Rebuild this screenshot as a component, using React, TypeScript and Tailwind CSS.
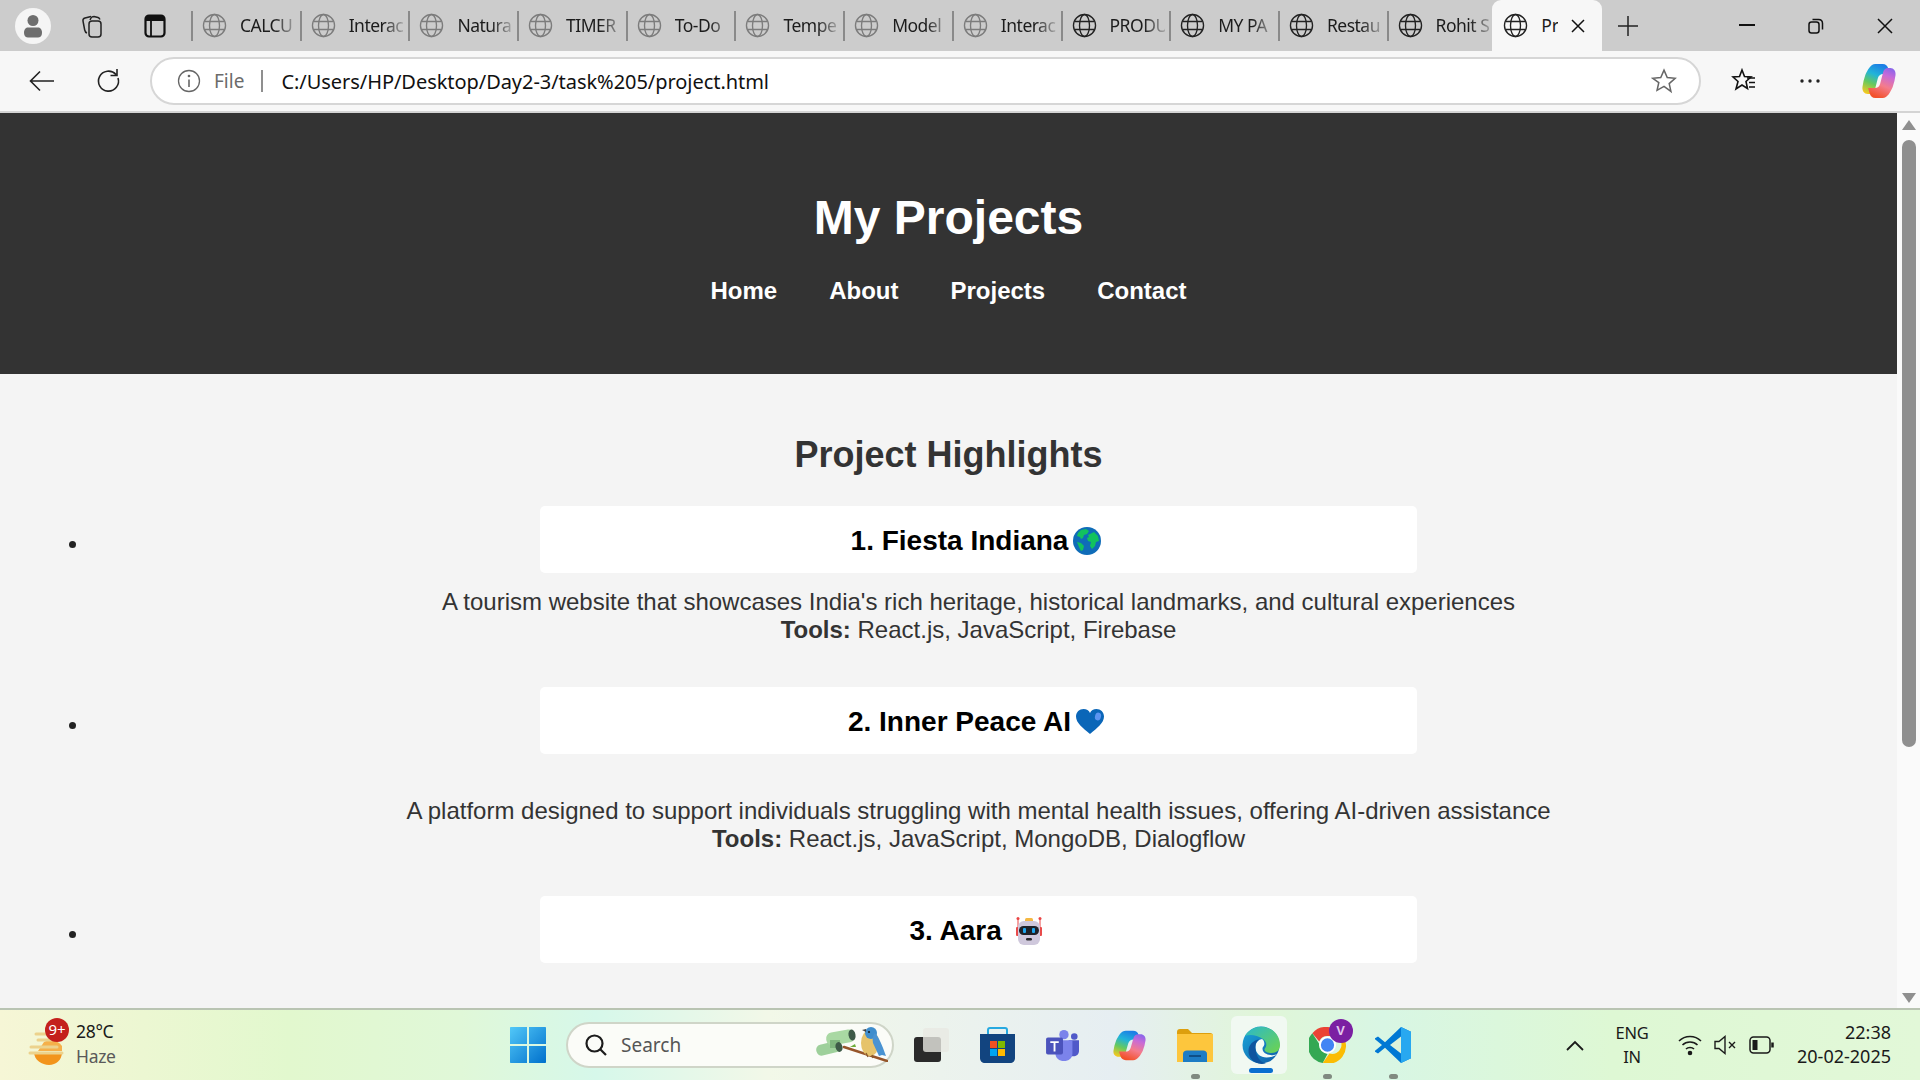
import React from "react";

const tabs = ["CALCU","Interac","Natura","TIMER","To-Do","Tempe","Model","Interac","PRODU","MY PA","Restau","Rohit S"];
const UI = "font-['Noto_Sans','Open_Sans',sans-serif]";

function Globe({ dim = false, size = 25 }: { dim?: boolean; size?: number }) {
  const c = dim ? "#7c7c7c" : "#222222";
  return (
    <svg width={size} height={size} viewBox="0 0 24 24" fill="none" stroke={c} strokeWidth="1.3" className="shrink-0">
      <circle cx="12" cy="12" r="10.6" />
      <ellipse cx="12" cy="12" rx="4.8" ry="10.6" />
      <path d="M2.2 8.2h19.6M2.2 15.8h19.6" />
    </svg>
  );
}

function Copilot({ w = 33, h = 36 }: { w?: number; h?: number }) {
  const lobe = "M14 1h8c3 0 5 1.500 6 5l1.500 5h-7c-3 0-5 1.500-5.800 4.500l-3 11c-.8 3-2.500 4.500-5.200 4.500H6c-3.500 0-6-3-5.500-7 .5-4 1.500-8 3-12C6 7 9 1 14 1z";
  return (
    <svg width={w} height={h} viewBox="0 0 36 36" preserveAspectRatio="none">
      <defs>
        <linearGradient id="cpa" x1="0.6" y1="0" x2="0.2" y2="1">
          <stop offset="0" stopColor="#1c7fe6" /><stop offset="0.35" stopColor="#22b4d8" /><stop offset="0.65" stopColor="#66c95e" /><stop offset="1" stopColor="#f6c81f" />
        </linearGradient>
        <linearGradient id="cpb" x1="0.6" y1="0" x2="0.2" y2="1">
          <stop offset="0" stopColor="#f2512b" /><stop offset="0.4" stopColor="#f47c8c" /><stop offset="0.75" stopColor="#c76ad8" /><stop offset="1" stopColor="#8a66ea" />
        </linearGradient>
      </defs>
      <path d={lobe} fill="url(#cpa)" />
      <path d={lobe} fill="url(#cpb)" transform="rotate(180 18 18)" />
    </svg>
  );
}

function Globe3D() {
  return (
    <svg width="28" height="28" viewBox="0 0 28 28">
      <circle cx="14" cy="14" r="14" fill="#0f6cb8" />
      <path d="M8 3l5-1 3 2-2 3-3 1-1 3-2 1-1-2-3-1 1-3 2-2zM15 8l6-3 4 4 1 5-3 1-1 4-3 3-2-3 1-4-3-1-1-3 2-1-1-2z" fill="#12c25e" />
      <path d="M4 15l4 1 3 3-1 4-2 1-2-4z" fill="#12c25e" />
    </svg>
  );
}

function Heart() {
  return (
    <svg width="28" height="26" viewBox="0 0 28 26">
      <path d="M14 25C7 19 0 14 0 7.500 0 3 3.500 0 7.500 0 10.500 0 13 1.500 14 4c1-2.500 3.500-4 6.500-4C24.500 0 28 3 28 7.500 28 14 21 19 14 25z" fill="#0a66b8" />
      <ellipse cx="22" cy="7.500" rx="3" ry="4" fill="#5c94f0" transform="rotate(15 22 7.500)" />
    </svg>
  );
}

function Robot() {
  return (
    <svg width="30" height="30" viewBox="0 0 30 30">
      <path d="M4 3v12M26 3v12" stroke="#ea4545" strokeWidth="1" />
      <circle cx="4" cy="2.500" r="1.500" fill="#ea4545" />
      <circle cx="26" cy="2.500" r="1.500" fill="#ea4545" />
      <rect x="2" y="11" width="3" height="9" rx="1" fill="#e84b4b" />
      <rect x="25" y="11" width="3" height="9" rx="1" fill="#e84b4b" />
      <rect x="11" y="2" width="8" height="4" rx="1.500" fill="#f5b842" />
      <rect x="4" y="5" width="22" height="24" rx="6" fill="#cfc8dc" />
      <rect x="5" y="10" width="20" height="9" rx="4.500" fill="#1e2128" />
      <rect x="9" y="12" width="3" height="5" rx="1" fill="#1fa6ee" />
      <rect x="18" y="12" width="3" height="5" rx="1" fill="#1fa6ee" />
      <rect x="12" y="22" width="6" height="2.500" rx="1.200" fill="#2a2a2f" />
    </svg>
  );
}

function Tab({ label, dim }: { label: string; dim: boolean }) {
  return (
    <div className="w-[108.700px] h-[30px] flex items-center pl-[9px] border-l-2 border-[#8a8a8a] shrink-0">
      <Globe dim={dim} />
      <span className={`ml-[13px] w-[55px] overflow-hidden whitespace-nowrap text-[17.500px] tracking-[-0.5px] text-[#1c1c1c] [mask-image:linear-gradient(to_right,black_62%,rgba(0,0,0,0.2))] ${UI}`}>{label}</span>
    </div>
  );
}

function TopBar() {
  return (
    <div className="h-[51px] bg-[#cccccc] flex items-center relative shrink-0">
      <div className="w-[191px] flex items-center shrink-0">
        <div className="ml-[15px] w-[36px] h-[36px] rounded-full bg-[#f5f5f5] flex items-center justify-center">
          <svg width="20" height="24" viewBox="0 0 20 24" fill="#6e6e6e">
            <circle cx="10" cy="6.500" r="5.500" />
            <path d="M1 19c0-4 2-5.500 4-5.500h10c2 0 4 1.500 4 5.500 0 3-2 4.500-4 4.500H5c-2 0-4-1.500-4-4.500z" />
          </svg>
        </div>
        <div className="ml-[28px]">
          <svg width="26" height="26" viewBox="0 0 26 26" fill="none" stroke="#222" strokeWidth="1.500">
            <rect x="10" y="8" width="12" height="16" rx="3" />
            <path d="M8 20c-1.500-.5-2-1.500-2.300-3L4 8c-.3-1.500.5-2.500 2-3l6-1.500" />
            <path d="M11 7l1-2c.5-1 1.500-1.500 3-1.500l4 1c1 .3 1.500 1 2 2" />
          </svg>
        </div>
        <div className="ml-[39px]">
          <svg width="22" height="24" viewBox="0 0 22 24" fill="none">
            <rect x="1.500" y="1.500" width="19" height="21" rx="3.500" stroke="#111" strokeWidth="2.200" />
            <path d="M2 2h18v5H2z" fill="#111" />
            <path d="M7 7v15" stroke="#111" strokeWidth="1.800" />
          </svg>
        </div>
      </div>
      {tabs.map((t, i) => <Tab key={i} label={t} dim={i < 8} />)}
      <div className="w-[110px] h-[51px] ml-[-3px] bg-[#f7f7f7] rounded-t-[9px] flex items-center pl-[11px] shrink-0 z-10">
        <Globe />
        <span className={`ml-[13px] w-[17px] overflow-hidden whitespace-nowrap text-[17.500px] text-[#1c1c1c] ${UI}`}>Pr</span>
        <svg className="ml-[13px]" width="14" height="14" viewBox="0 0 14 14" stroke="#111" strokeWidth="1.500"><path d="M1 1l12 12M13 1L1 13" /></svg>
      </div>
      <svg className="ml-[15px]" width="22" height="22" viewBox="0 0 22 22" stroke="#222" strokeWidth="1.500"><path d="M11 1v20M1 11h20" /></svg>
      <svg className="ml-[100px]" width="16" height="3" viewBox="0 0 16 3"><rect width="16" height="2" fill="#111" /></svg>
      <svg className="ml-[53px]" width="16" height="16" viewBox="0 0 16 16" fill="none" stroke="#111" strokeWidth="1.500">
        <rect x="1" y="4" width="10" height="11" rx="2.500" />
        <path d="M4.500 1.500h6c2.500 0 4 1.500 4 4v6" />
      </svg>
      <svg className="ml-[53px]" width="16" height="16" viewBox="0 0 16 16" stroke="#111" strokeWidth="1.500"><path d="M1 1l14 14M15 1L1 15" /></svg>
    </div>
  );
}

function ToolBar() {
  return (
    <div className="h-[62px] bg-[#f7f7f7] border-b-2 border-[#d4d4d4] flex items-center shrink-0 z-20">
      <svg className="ml-[29px]" width="26" height="22" viewBox="0 0 26 22" fill="none" stroke="#222" strokeWidth="1.600"><path d="M25 11H2M11 1.500L1.500 11l9.500 9.500" /></svg>
      <svg className="ml-[41px]" width="26" height="26" viewBox="0 0 26 26" fill="none" stroke="#222" strokeWidth="1.600"><path d="M22 10a10 10 0 1 1-2-3.500M21 1v6.500h-6.500" /></svg>
      <div className="ml-[28px] w-[1551px] h-[48px] bg-white rounded-full border-2 border-[#d6d6d6] flex items-center">
        <svg className="ml-[25px]" width="24" height="24" viewBox="0 0 24 24" fill="none" stroke="#666" strokeWidth="1.300">
          <circle cx="12" cy="12" r="10.500" /><path d="M12 10.500V18" strokeWidth="1.600" /><circle cx="12" cy="7" r="0.700" fill="#666" />
        </svg>
        <span className={`ml-[13px] mt-[1px] text-[19px] text-[#6b6b6b] ${UI}`}>File</span>
        <div className="ml-[17px] w-[2px] h-[22px] bg-[#8f8f8f]" />
        <span className={`ml-[18px] mt-[1px] text-[20px] tracking-[-0.05px] text-[#111] ${UI}`}>C:/Users/HP/Desktop/Day2-3/task%205/project.html</span>
        <svg className="ml-auto mr-[22px]" width="26" height="26" viewBox="0 0 24 24" fill="none" stroke="#666" strokeWidth="1.400"><path d="M12 2l3 6.800 7.300.7-5.500 4.900 1.600 7.200L12 17l-6.400 3.600 1.600-7.200L1.700 9.500 9 8.800z" /></svg>
      </div>
      <svg className="ml-[30px]" width="26" height="26" viewBox="0 0 26 26" fill="none" stroke="#111" strokeWidth="1.600"><path d="M11 2l2.500 6.500L20 9l-5 4.500 1.500 7L11 17l-6 4 2-7.500L2 9l6.500-.5z" /><path d="M16 10h8M18 14.500h6M18 19h6" /></svg>
      <svg className="ml-[43px]" width="20" height="4" viewBox="0 0 20 4" fill="#222"><circle cx="2" cy="2" r="1.700" /><circle cx="10" cy="2" r="1.700" /><circle cx="18" cy="2" r="1.700" /></svg>
      <div className="ml-[42px]"><Copilot w={34} h={36} /></div>
    </div>
  );
}

function Project({ title, emoji, desc, tools, first }: { title: string; emoji: React.ReactNode; desc?: string; tools?: string; first?: boolean }) {
  return (
    <li className="flex items-start">
      <div className="w-[7px] h-[7px] rounded-full bg-[#222] mt-[35px] shrink-0" />
      <div className="flex-1 flex flex-col items-center">
        <div className="w-[877px] h-[67px] pt-[3px] bg-white rounded-[5px] flex items-center justify-center">
          <h3 className="text-[28px] font-bold text-black whitespace-pre flex items-center leading-[32px]">{title}<span className="w-[38px] flex justify-center">{emoji}</span></h3>
        </div>
        {desc && (
          <p className={`text-[24px] leading-[28px] text-[#333] text-center ${first ? "mt-[15px] mb-[43px]" : "mt-[43px] mb-[43px]"}`}>
            {desc}<br /><b>Tools:</b> {tools}
          </p>
        )}
      </div>
    </li>
  );
}

function Page() {
  return (
    <div className="flex-1 flex min-h-0 overflow-hidden font-['Liberation_Sans',Arial,sans-serif]">
      <div className="flex-1 min-w-0 overflow-hidden bg-[#f4f4f4]">
        <header className="h-[261px] bg-[#333] flex flex-col items-center text-white font-bold pt-[77px]">
          <h1 className="text-[48px] leading-[55px]">My Projects</h1>
          <nav className="mt-[32px] flex gap-[52px] text-[24px] leading-[28px]">
            <span>Home</span><span>About</span><span>Projects</span><span>Contact</span>
          </nav>
        </header>
        <h2 className="mt-[60px] text-[36px] leading-[41px] font-bold text-[#333] text-center">Project Highlights</h2>
        <ul className="mt-[31px] pl-[69px] pr-[16px]">
          <Project first title="1. Fiesta Indiana" emoji={<Globe3D />} desc="A tourism website that showcases India's rich heritage, historical landmarks, and cultural experiences" tools="React.js, JavaScript, Firebase" />
          <Project title="2. Inner Peace AI" emoji={<Heart />} desc="A platform designed to support individuals struggling with mental health issues, offering AI-driven assistance" tools="React.js, JavaScript, MongoDB, Dialogflow" />
          <Project title="3. Aara " emoji={<Robot />} />
        </ul>
      </div>
      <div className="w-[23px] bg-[#fafafa] flex flex-col items-center shrink-0">
        <svg className="mt-[7px]" width="14" height="11" viewBox="0 0 14 11" fill="#8f8f8f"><path d="M7 0l7 10H0z" /></svg>
        <div className="mt-[9px] w-[14px] h-[607px] rounded-full bg-[#8f8f8f]" />
        <svg className="mt-auto mb-[5px]" width="14" height="11" viewBox="0 0 14 11" fill="#8f8f8f"><path d="M7 11L0 1h14z" /></svg>
      </div>
    </div>
  );
}

function Weather() {
  return (
    <svg width="40" height="46" viewBox="0 0 40 46">
      <path d="M6 30h28c0 8-6 13-13 13S6 38 6 30z" fill="#f2941c" />
      <path d="M16 20c6-3 14-2 18 4v5H10z" fill="#f5b04a" />
      <path d="M8 12h10M10 18h14M3 25h26M2 31h32" stroke="#ecd28c" strokeWidth="3" strokeLinecap="round" />
    </svg>
  );
}

function Bird() {
  return (
    <svg width="72" height="36" viewBox="0 0 72 36">
      <path d="M28 21l43 14" stroke="#96552a" strokeWidth="2.500" strokeLinecap="round" />
      <path d="M34 21l5-3 1 3z" fill="#6fae3c" />
      <rect x="0" y="17" width="25" height="11" rx="5" fill="#9ed09b" transform="rotate(-14 12 22)" />
      <rect x="10" y="5" width="29" height="13" rx="6" fill="#a9d8a3" transform="rotate(-10 24 11)" />
      <rect x="14" y="14" width="10" height="8" fill="#7fb57e" />
      <ellipse cx="23" cy="21" rx="3.500" ry="5" fill="#3e5a48" transform="rotate(-14 23 21)" />
      <ellipse cx="36" cy="9" rx="3.500" ry="5.500" fill="#3e5a48" transform="rotate(-10 36 9)" />
      <ellipse cx="54" cy="17" rx="9" ry="13" fill="#e6c36b" />
      <circle cx="55" cy="7" r="6" fill="#3f8dcc" />
      <path d="M50 6l-4-2 4-1z" fill="#444" />
      <circle cx="53" cy="6" r="1.100" fill="#15202b" />
      <path d="M59 7c4 4 7 12 11 23l-4-1-3 1-6-13c-1-4 0-8 2-10z" fill="#4a93d2" />
      <path d="M50 27l2 4M56 29l1 3" stroke="#8a5a2a" strokeWidth="1.400" />
    </svg>
  );
}

function Store() {
  return (
    <svg width="35" height="36" viewBox="0 0 35 36">
      <path d="M8 8V3c0-1.500.8-2 2-2h15c1.200 0 2 .5 2 2v5" fill="none" stroke="#27a9e0" strokeWidth="2" />
      <path d="M0 7h35v24c0 3-2 5-5 5H5c-3 0-5-2-5-5z" fill="#12447f" />
      <rect x="10" y="14" width="7" height="7" fill="#f25022" /><rect x="18" y="14" width="7" height="7" fill="#7fba00" />
      <rect x="10" y="22" width="7" height="7" fill="#00a4ef" /><rect x="18" y="22" width="7" height="7" fill="#ffb900" />
    </svg>
  );
}

function Teams() {
  return (
    <svg width="36" height="32" viewBox="0 0 36 34">
      <circle cx="19" cy="6" r="5" fill="#7b83eb" />
      <circle cx="30" cy="8" r="3.500" fill="#5059c9" />
      <path d="M24 12h11v11c0 4-3 6-6 6h-5z" fill="#5059c9" />
      <path d="M10 12h18v14c0 5-4 8-9 8s-9-3-9-8z" fill="#7b83eb" />
      <rect x="0" y="9" width="18" height="18" rx="2" fill="#4b53bc" />
      <path d="M4.500 13h9v2H10v9H8v-9H4.500z" fill="#fff" />
    </svg>
  );
}

function Folder() {
  return (
    <svg width="36" height="33" viewBox="0 0 36 33">
      <path d="M0 3c0-2 1-3 3-3h8l4 4h18c2 0 3 1 3 3v3H0z" fill="#dd9f0d" />
      <path d="M0 5h36v28H0z" fill="#fdc63d" />
      <path d="M6 25c0-2 1.500-3.500 4-3.500h16c2.500 0 4 1.500 4 3.500v8H6z" fill="#1c7cc4" />
      <rect x="12" y="26" width="12" height="2" fill="#0e4f87" />
    </svg>
  );
}

function Edge() {
  return (
    <svg width="38" height="38" viewBox="0 0 38 38">
      <defs>
        <linearGradient id="edg" x1="0" y1="0" x2="1" y2="1"><stop offset="0" stopColor="#1aa6d9" /><stop offset="1" stopColor="#0f5ca8" /></linearGradient>
        <linearGradient id="edh" x1="0" y1="0" x2="1" y2="1"><stop offset="0" stopColor="#2ab8cc" /><stop offset="1" stopColor="#6fd44c" /></linearGradient>
      </defs>
      <circle cx="19" cy="19" r="18.500" fill="url(#edg)" />
      <path d="M3 10C8 2 17-1 26 2c7 2.500 12 9 12 17 0 5-3.500 8-8.500 8-4 0-7-1.500-7-3.500 0-1 1-1.500 1.500-3 .8-2.500 0-5.500-3-7.500C15 9 8 8 3 10z" fill="url(#edh)" />
      <path d="M20 13c-5 1-7 5-6.500 9.500.6 5 5 9 11 9 4 0 8-1 11-3.500-2 1-4.500 1.500-7 1-4-.3-8-2.500-8-6.500 0-1 .6-1.500 1.500-3 1-2.500-.3-5.500-2-6.500z" fill="#f4fbf7" />
      <path d="M13.500 22.500c-.5-4 1-7.500 4-9-6 .5-11 5-11 11.500 0 6 4 11 10 12.500 2.500.6 5 .5 7.500-.2-6-1-10-7-10.500-14.800z" fill="#0e559f" />
    </svg>
  );
}

function Chrome() {
  return (
    <div className="relative w-[37px] h-[36px]">
      <svg width="37" height="36" viewBox="0 0 38 38">
        <path d="M19 0a19 19 0 0 1 16.500 9.500H19a9.500 9.500 0 0 0-8.700 5.700L3 6.500A19 19 0 0 1 19 0z" fill="#ea4335" />
        <path d="M3 6.500l8 12.500a9.500 9.500 0 0 0 8 9.500L14 38A19 19 0 0 1 3 6.500z" fill="#34a853" />
        <path d="M35.500 9.500A19 19 0 0 1 14 38l7-10a9.500 9.500 0 0 0 6-18.500z" fill="#fbbc04" />
        <circle cx="19" cy="19" r="8" fill="#4285f4" stroke="#fff" strokeWidth="2" />
      </svg>
      <div className="absolute top-[-8px] left-[20px] w-[24px] h-[24px] rounded-full bg-[#7b1fa2] text-[#e3c7ee] text-[13px] font-bold flex items-center justify-center font-['Liberation_Sans',sans-serif]">V</div>
    </div>
  );
}

function VSCode() {
  return (
    <svg width="36" height="36" viewBox="0 0 36 38" preserveAspectRatio="none">
      <path d="M26 0l10 5v28l-10 5L10 22 3 28l-3-2v-1l7-6-7-6v-1l3-2 7 6z" fill="#0078d4" />
      <path d="M26 0l10 5v28l-10 5z" fill="#28a8f0" />
      <path d="M26 10L15 19l11 9z" fill="#dff3da" />
    </svg>
  );
}

function Slot({ children, dot, active }: { children: React.ReactNode; dot?: boolean; active?: boolean }) {
  return (
    <div className="w-[66px] h-[70px] relative flex items-center justify-center shrink-0">
      {active && <div className="absolute left-[3px] right-[7px] top-[6px] bottom-[6px] rounded-[6px] bg-[#f1f9f2]" />}
      <div className="relative">{children}</div>
      {dot && <div className="absolute left-[29px] bottom-[1px] w-[9px] h-[5px] rounded-full bg-[#808a80]" />}
      {active && <div className="absolute left-[21px] bottom-[7px] w-[24px] h-[5px] rounded-full bg-[#0a6fd0]" />}
    </div>
  );
}

function TaskBar() {
  return (
    <div className={`h-[72px] border-t-2 border-[#b9c4b2] bg-[linear-gradient(90deg,#f6f6d6_0%,#e2f8ce_15%,#e0f8d8_24%,#d6f8ea_31%,#f2f8e8_40%,#e6eef2_58%,#e0f6d8_66%,#d8f6e4_72%,#def8d4_84%,#e2f8d8_100%)] flex items-center shrink-0 ${UI}`}>
      <div className="w-[500px] flex items-center pl-[28px] shrink-0 relative">
        <Weather />
        <div className="absolute left-[45px] top-[-4px] w-[24px] h-[24px] rounded-full bg-[#c4201c] text-white text-[15px] flex items-center justify-center">9+</div>
        <div className="ml-[8px] mt-[-3px] flex flex-col leading-[25px]">
          <span className="text-[17.500px] text-[#1a1a1a] tracking-[-0.3px]">28°C</span>
          <span className="text-[17.500px] text-[#5a5a5a] tracking-[-0.3px]">Haze</span>
        </div>
      </div>
      <div className="w-[56px] flex justify-center shrink-0">
        <svg width="36" height="36" viewBox="0 0 36 36">
          <defs><linearGradient id="win" x1="0" y1="0" x2="1" y2="1"><stop offset="0" stopColor="#52c8f8" /><stop offset="1" stopColor="#0070cc" /></linearGradient></defs>
          <path d="M1 0h16v17H0V1c0-.6.4-1 1-1zM19 0h16c.6 0 1 .4 1 1v16H19zM0 19h17v17H1c-.6 0-1-.4-1-1zM19 19h17v16c0 .6-.4 1-1 1H19z" fill="url(#win)" />
        </svg>
      </div>
      <div className="ml-[10px] w-[328px] h-[46px] rounded-full bg-[#fbfcf8] border-2 border-[#cfd5c8] flex items-center shrink-0">
        <svg className="ml-[16px]" width="24" height="24" viewBox="0 0 24 24" fill="none" stroke="#1c1c1c" strokeWidth="2.200"><circle cx="10.500" cy="10.500" r="8" /><path d="M16.500 16.500L22 22" /></svg>
        <span className="ml-[13px] text-[19px] text-[#555]">Search</span>
        <div className="ml-auto mr-[4px] mb-[2px]"><Bird /></div>
      </div>
      <div className="ml-[4px] flex shrink-0">
        <Slot>
          <div className="relative w-[35px] h-[34px]">
            <div className="absolute left-0 bottom-0 w-[27px] h-[25px] rounded-[3px] bg-[#2a2a2a]" />
            <div className="absolute right-0 top-0 w-[26px] h-[24px] rounded-[3px] bg-[#e8e8e2]/80" />
          </div>
        </Slot>
        <Slot><Store /></Slot>
        <Slot><Teams /></Slot>
        <Slot><Copilot w={33} h={31} /></Slot>
        <Slot dot><Folder /></Slot>
        <Slot active><Edge /></Slot>
        <Slot dot><Chrome /></Slot>
        <Slot dot><VSCode /></Slot>
      </div>
      <div className="ml-[129px] w-[40px] flex justify-center shrink-0">
        <svg width="18" height="11" viewBox="0 0 18 11" fill="none" stroke="#1a1a1a" strokeWidth="1.800"><path d="M1 10l8-8 8 8" /></svg>
      </div>
      <div className="ml-[7px] w-[60px] flex flex-col items-center leading-[24px] text-[16.500px] text-[#1a1a1a] tracking-[-0.2px] shrink-0">
        <span>ENG</span><span>IN</span>
      </div>
      <div className="ml-[10px] w-[35px] flex justify-center shrink-0">
        <svg width="24" height="22" viewBox="0 0 24 22" fill="none" stroke="#1a1a1a" strokeWidth="1.600"><path d="M1 7c6-6 16-6 22 0M4.500 11c4-4 11-4 15 0M8 15c2-2 6-2 8 0" /><circle cx="12" cy="19" r="1.500" fill="#1a1a1a" /></svg>
      </div>
      <div className="w-[35px] flex justify-center shrink-0">
        <svg width="24" height="22" viewBox="0 0 24 22" fill="none" stroke="#1a1a1a" strokeWidth="1.400"><path d="M2 7.500v7h4l6 5V2.500l-6 5zM16 8l6 6M22 8l-6 6" /></svg>
      </div>
      <div className="w-[38px] flex justify-center shrink-0">
        <svg width="25" height="18" viewBox="0 0 25 18" fill="none" stroke="#1a1a1a" strokeWidth="1.500"><rect x="1" y="1" width="20" height="16" rx="3.500" /><rect x="3.500" y="4" width="5" height="10" fill="#1a1a1a" stroke="none" /><path d="M23.500 6.500v5" strokeWidth="2.500" /></svg>
      </div>
      <div className="flex-1 pr-[29px] mt-[-2px] flex flex-col items-end leading-[24px] text-[18px] text-[#1a1a1a]">
        <span>22:38</span><span>20-02-2025</span>
      </div>
    </div>
  );
}

export default function App() {
  return (
    <div className="w-[1920px] h-[1080px] flex flex-col overflow-hidden">
      <TopBar />
      <ToolBar />
      <Page />
      <TaskBar />
    </div>
  );
}
